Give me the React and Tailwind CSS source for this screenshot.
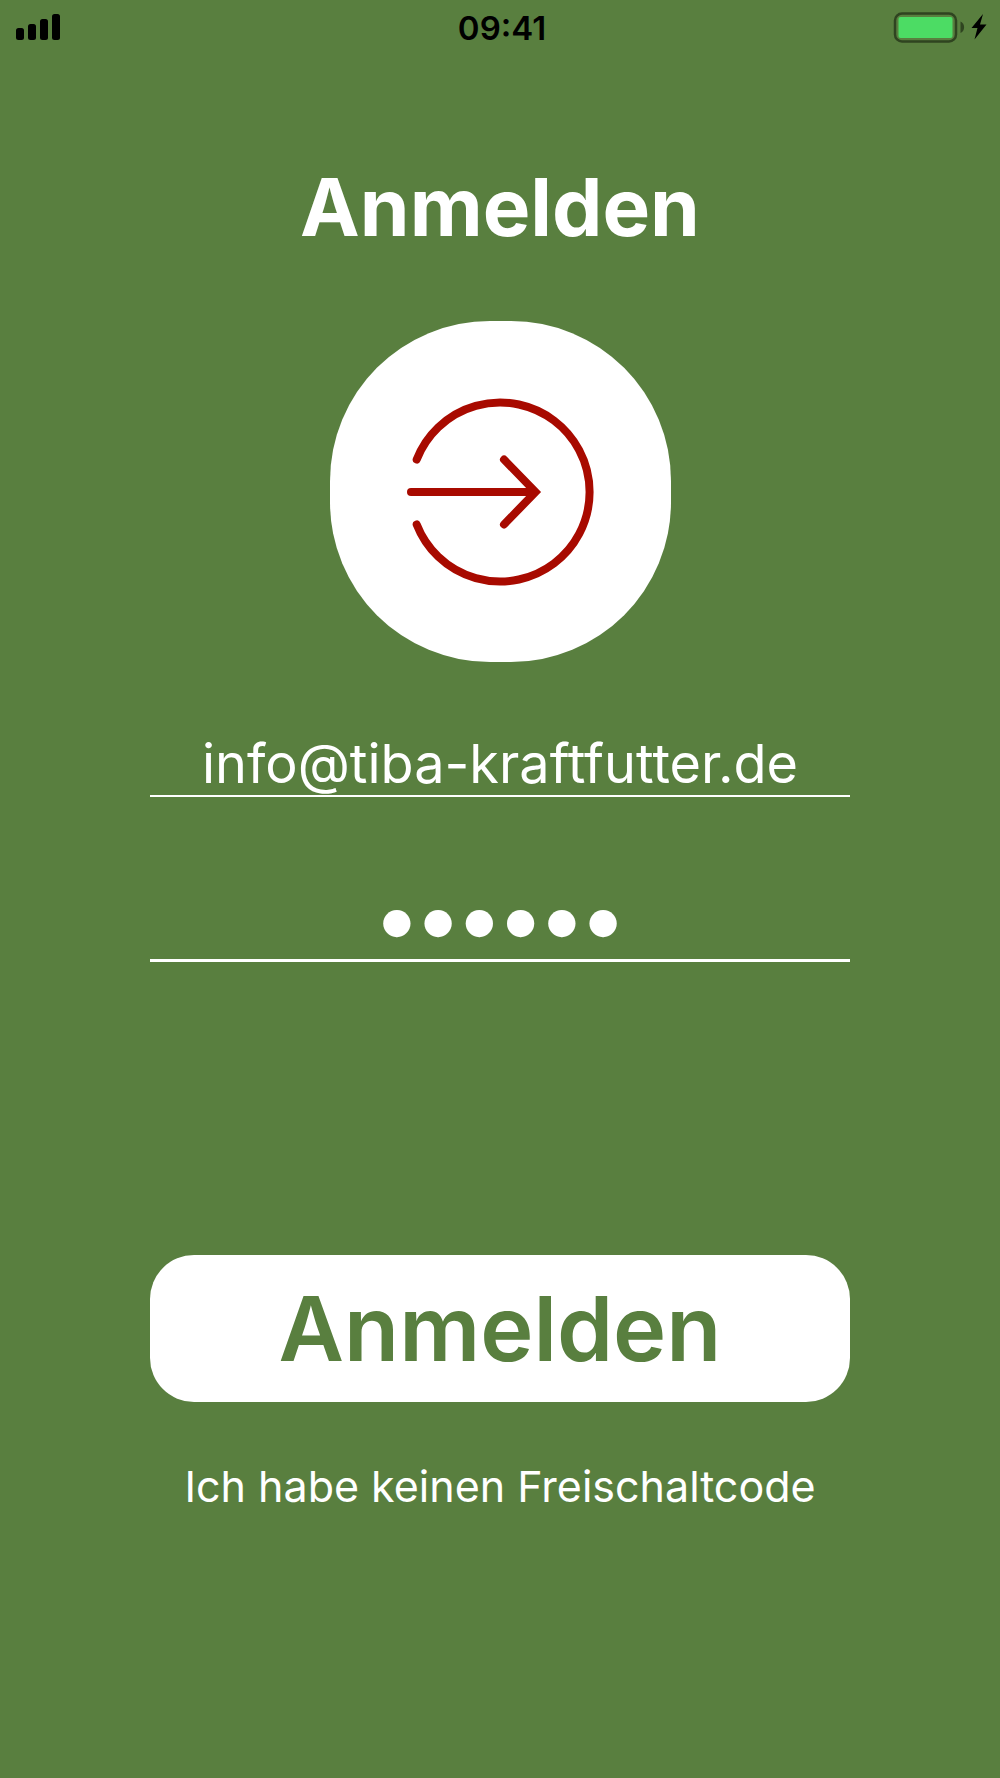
import React, { useState } from 'react';

const StatusBar = () => (
  <header className="flex h-14 items-center justify-between pl-4 pr-3 text-black">
    <div className="flex flex-1">
      <svg className="h-7 w-11" viewBox="0 0 44 28" fill="currentColor" aria-hidden="true">
        <rect x="0" y="14" width="8" height="12" rx="2.5" />
        <rect x="12" y="10" width="8" height="16" rx="2.5" />
        <rect x="24" y="5" width="8" height="21" rx="2.5" />
        <rect x="36" y="0" width="8" height="26" rx="2.5" />
      </svg>
    </div>
    <time className="text-[33px] font-semibold leading-[54px]">09:41</time>
    <div className="flex flex-1 justify-end">
      <svg className="h-8 w-24" viewBox="0 0 96 32" aria-hidden="true">
        <rect x="3" y="1.5" width="61" height="28" rx="7" fill="none" stroke="#2f4420" strokeWidth="2.5" />
        <rect x="6.5" y="5" width="54" height="21" rx="2" fill="#4cdc64" />
        <path d="M68.5 9.5c4.8 2 4.8 9.5 0 11.5z" fill="#2f4420" />
        <path d="M91 2 79.5 16h6L82.5 27.5 94.5 12.5h-6.5z" fill="currentColor" />
      </svg>
    </div>
  </header>
);

const LoginIcon = () => (
  <svg
    className="size-[188px]"
    viewBox="0 0 188 188"
    fill="none"
    stroke="#a80a00"
    strokeWidth="8"
    strokeLinecap="round"
    aria-hidden="true"
  >
    <path d="M10.7 61.5a89.5 89.5 0 1 1 0 65" />
    <path d="M5 94h121" />
    <path d="M98 61.5 129.5 94 98 126.5" />
  </svg>
);

const App = () => {
  const [email, setEmail] = useState('info@tiba-kraftfutter.de');
  const [code, setCode] = useState('123456');

  return (
    <div className="min-h-screen bg-[#597f3f] font-['Inter',sans-serif] text-white">
      <StatusBar />

      <main className="flex flex-col items-center px-[15%] pt-[103px] pb-16">
        <h1 className="text-[80px] font-bold leading-24">Anmelden</h1>

        <div className="mt-[66px] flex size-[341px] items-center justify-center rounded-[160px] bg-white">
          <LoginIcon />
        </div>

        <form className="mt-[69px] flex w-full flex-col" onSubmit={(e) => e.preventDefault()}>
          <input
            type="email"
            aria-label="E-Mail"
            value={email}
            onChange={(e) => setEmail(e.target.value)}
            className="h-[66px] w-full border-b-2 border-white bg-transparent text-center text-[54px] outline-none"
          />

          <input
            type="password"
            aria-label="Freischaltcode"
            value={code}
            onChange={(e) => setCode(e.target.value)}
            className="mt-20 h-[85px] w-full border-b-3 border-white bg-transparent text-center text-[87px] font-bold outline-none"
          />

          <button
            type="submit"
            className="mt-[293px] h-[147px] w-full cursor-pointer rounded-[44px] bg-white text-[90px] font-semibold leading-24 text-[#597f3f]"
          >
            Anmelden
          </button>
        </form>

        <a href="#freischaltcode" className="mt-14 whitespace-nowrap text-[43px] leading-14">
          Ich habe keinen Freischaltcode
        </a>
      </main>
    </div>
  );
};

export default App;
